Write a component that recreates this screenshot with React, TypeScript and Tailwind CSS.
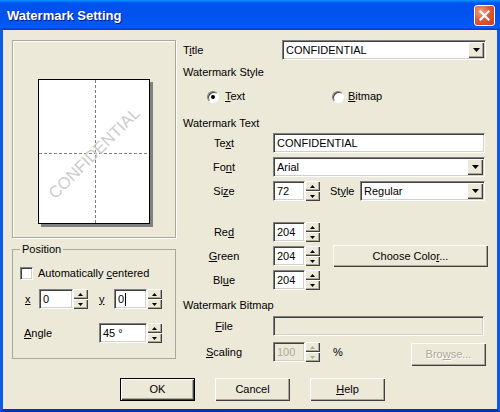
import type { ReactNode } from "react";

const sunken =
  "border border-t-[#808080] border-l-[#808080] border-b-white border-r-white shadow-[inset_1px_1px_0_#404040,inset_-1px_-1px_0_#d4d0c8]";
const raised =
  "bg-[#ece9d8] shadow-[inset_1px_1px_0_#fff,inset_-1px_-1px_0_#404040,inset_-2px_-2px_0_#aca899]";
const grayText = "text-[#aca899] [text-shadow:1px_1px_0_#fff]";

function U({ children }: { children: ReactNode }) {
  return <span className="underline decoration-1 underline-offset-[1px]">{children}</span>;
}

function Arrow({ dir, size = "sm", disabled }: { dir: "up" | "down"; size?: "sm" | "lg"; disabled?: boolean }) {
  const w = size === "lg" ? 7 : 5;
  const h = size === "lg" ? 4 : 3;
  const pts = dir === "up" ? `0,${h} ${w / 2},0 ${w},${h}` : `0,0 ${w / 2},${h} ${w},0`;
  return (
    <svg width={w} height={h} viewBox={`0 0 ${w} ${h}`} className="block">
      <polygon points={pts} fill={disabled ? "#aca899" : "#000"} />
    </svg>
  );
}

function Spin({ disabled }: { disabled?: boolean }) {
  return (
    <div className="flex h-[20px] w-[15px] flex-col">
      <div className={`${raised} flex h-[10px] items-center justify-center`}>
        <Arrow dir="up" disabled={disabled} />
      </div>
      <div className={`${raised} flex h-[10px] items-center justify-center`}>
        <Arrow dir="down" disabled={disabled} />
      </div>
    </div>
  );
}

function Edit({ w, children, disabled }: { w: string; children?: ReactNode; disabled?: boolean }) {
  return (
    <div
      className={`${sunken} ${w} flex h-[20px] items-center pl-[3px] ${
        disabled ? "bg-[#ece9d8] text-[#aca899]" : "bg-white"
      }`}
    >
      {children}
    </div>
  );
}

function NumField({ w, value, disabled, cursor }: { w: string; value: string; disabled?: boolean; cursor?: boolean }) {
  return (
    <div className="flex">
      <Edit w={w} disabled={disabled}>
        {value}
        {cursor ? <span className="ml-px inline-block h-[13px] w-px bg-black" /> : null}
      </Edit>
      <Spin disabled={disabled} />
    </div>
  );
}

function Combo({ w, value }: { w: string; value: string }) {
  return (
    <div className={`${sunken} ${w} flex h-[20px] items-center bg-white pl-[3px] pr-[1px]`}>
      <span className="flex-1">{value}</span>
      <div className={`${raised} flex h-[16px] w-[16px] items-center justify-center`}>
        <Arrow dir="down" size="lg" />
      </div>
    </div>
  );
}

function Button({ children, isDefault, disabled, className = "" }: { children: ReactNode; isDefault?: boolean; disabled?: boolean; className?: string }) {
  return (
    <div
      className={`flex items-center justify-center ${className} ${
        isDefault ? "border border-black" : ""
      } ${raised} ${disabled ? grayText : "text-black"}`}
    >
      {children}
    </div>
  );
}

function Radio({ checked }: { checked?: boolean }) {
  return (
    <div className="flex h-[12px] w-[12px] items-center justify-center rounded-full border border-t-[#808080] border-l-[#808080] border-b-white border-r-white bg-white shadow-[inset_1px_1px_0_#404040]">
      {checked ? <div className="h-[4px] w-[4px] rounded-full bg-black" /> : null}
    </div>
  );
}

function RowLabel({ children }: { children: ReactNode }) {
  return <span className="w-[82px] text-center">{children}</span>;
}

function PagePreview() {
  return (
    <div className="h-[145px] w-[112px] border border-black bg-white shadow-[3px_3px_0_#808080]">
      <svg width="110" height="143" viewBox="0 0 110 143" className="block">
        <line x1="56.5" y1="0" x2="56.5" y2="143" stroke="#808080" strokeDasharray="3 2" />
        <line x1="0" y1="73.5" x2="110" y2="73.5" stroke="#808080" strokeDasharray="3 2" />
        <text
          x="56"
          y="74"
          textAnchor="middle"
          dominantBaseline="middle"
          transform="rotate(-45 56 74)"
          fill="#cccccc"
          fontSize="16.5"
          fontFamily="'Liberation Sans', Arial, sans-serif"
        >
          CONFIDENTIAL
        </text>
      </svg>
    </div>
  );
}

export default function App() {
  return (
    <div className="flex h-[412px] w-[500px] flex-col font-['Liberation_Sans',Arial,sans-serif] text-[11px] leading-[13px] text-black">
      {/* title bar */}
      <div className="flex h-[30px] items-center justify-between bg-[linear-gradient(180deg,#0997ff_0%,#0053ee_10%,#0050ee_40%,#0058f0_80%,#005bff_92%,#0043d8_96%,#003dd7_100%)] pl-[7px] pr-[5px]">
        <span className="text-[13px] font-bold text-white [text-shadow:1px_1px_0_#0a1883]">Watermark Setting</span>
        <div className="flex h-[21px] w-[21px] items-center justify-center rounded-[3px] border border-white bg-[radial-gradient(circle_at_30%_30%,#f0a58a_0%,#e2593a_45%,#c63d1b_100%)]">
          <svg width="11" height="11" viewBox="0 0 11 11">
            <path d="M1.5 1.5 L9.5 9.5 M9.5 1.5 L1.5 9.5" stroke="#fff" strokeWidth="2.2" strokeLinecap="square" />
          </svg>
        </div>
      </div>

      {/* client */}
      <div className="flex flex-1 flex-col border-x-[3px] border-b-[3px] border-x-[#0b5ae8] border-b-[#0a30b8] bg-[#ece9d8] pl-[9px] pt-[10px]">
        <div className="flex h-[328px]">
          {/* left column */}
          <div className="flex w-[164px] flex-col">
            <div className="h-[198px] border border-[#aca899] pl-[25px] pt-[38px] shadow-[inset_1px_1px_0_#fff,1px_1px_0_#fff]">
              <PagePreview />
            </div>
            <fieldset className="mt-[5px] h-[116px] border border-[#aca899]">
              <legend className="ml-[7px] px-[2px] leading-[13px]">Position</legend>
              <div className="ml-[7px] mt-[11px] flex items-center gap-[5px]">
                <div className={`${sunken} h-[13px] w-[13px] bg-white`} />
                <span>
                  Automatically <U>c</U>entered
                </span>
              </div>
              <div className="mt-[9px] flex items-center">
                <span className="ml-[12px] w-[14px]">
                  <U>x</U>
                </span>
                <NumField w="w-[34px]" value="0" />
                <span className="ml-[11px] w-[15px]">
                  <U>y</U>
                </span>
                <NumField w="w-[33px]" value="0" cursor />
              </div>
              <div className="mt-[14px] flex items-center">
                <span className="ml-[11px] w-[75px]">
                  <U>A</U>ngle
                </span>
                <NumField w="w-[48px]" value="45 °" />
              </div>
            </fieldset>
          </div>

          {/* right column */}
          <div className="ml-[7px] flex w-[305px] flex-col">
            <div className="flex h-[20px] items-center">
              <span className="w-[99px]">
                T<U>i</U>tle
              </span>
              <Combo w="w-[204px]" value="CONFIDENTIAL" />
            </div>
            <span className="mt-[6px]">Watermark Style</span>
            <div className="mt-[11px] flex h-[13px] items-center">
              <div className="ml-[24px] flex w-[125px] items-center gap-[6px]">
                <Radio checked />
                <span>
                  <U>T</U>ext
                </span>
              </div>
              <div className="flex items-center gap-[4px]">
                <Radio />
                <span>
                  <U>B</U>itmap
                </span>
              </div>
            </div>
            <span className="mt-[14px]">Watermark Text</span>
            <div className="mt-[3px] flex h-[20px] items-center">
              <RowLabel>
                Te<U>x</U>t
              </RowLabel>
              <div className="ml-[8px]">
                <Edit w="w-[212px]">CONFIDENTIAL</Edit>
              </div>
            </div>
            <div className="mt-[4px] flex h-[20px] items-center">
              <RowLabel>
                Fo<U>n</U>t
              </RowLabel>
              <div className="ml-[8px]">
                <Combo w="w-[212px]" value="Arial" />
              </div>
            </div>
            <div className="mt-[4px] flex h-[20px] items-center">
              <RowLabel>
                Si<U>z</U>e
              </RowLabel>
              <div className="ml-[8px]">
                <NumField w="w-[32px]" value="72" />
              </div>
              <span className="ml-[10px] w-[30px]">
                St<U>y</U>le
              </span>
              <Combo w="w-[125px]" value="Regular" />
            </div>
            <div className="mt-[21px] flex h-[20px] items-center">
              <RowLabel>
                Re<U>d</U>
              </RowLabel>
              <div className="ml-[8px]">
                <NumField w="w-[32px]" value="204" />
              </div>
            </div>
            <div className="mt-[3px] flex h-[22px] items-center">
              <RowLabel>
                <U>G</U>reen
              </RowLabel>
              <div className="ml-[8px]">
                <NumField w="w-[32px]" value="204" />
              </div>
              <Button className="ml-[13px] h-[22px] w-[155px]">
                <span>
                  Choose Colo<U>r</U>...
                </span>
              </Button>
            </div>
            <div className="mt-[3px] flex h-[20px] items-center">
              <RowLabel>
                Bl<U>u</U>e
              </RowLabel>
              <div className="ml-[8px]">
                <NumField w="w-[32px]" value="204" />
              </div>
            </div>
            <span className="mt-[9px]">Watermark Bitmap</span>
            <div className="mt-[4px] flex h-[20px] items-center">
              <RowLabel>
                <U>F</U>ile
              </RowLabel>
              <div className="ml-[8px]">
                <Edit w="w-[211px]" disabled />
              </div>
            </div>
            <div className="mt-[6px] flex items-start">
              <div className="flex h-[20px] items-center">
                <RowLabel>
                  <U>S</U>caling
                </RowLabel>
                <div className="ml-[8px]">
                  <NumField w="w-[32px]" value="100" disabled />
                </div>
                <span className="ml-[13px]">%</span>
              </div>
              <Button disabled className="ml-auto mr-[2px] mt-[1px] h-[23px] w-[75px]">
                <span>
                  Bro<U>w</U>se...
                </span>
              </Button>
            </div>
          </div>
        </div>

        {/* bottom buttons */}
        <div className="ml-[108px] mt-[10px] flex gap-[20px]">
          <Button isDefault className="h-[23px] w-[75px]">
            OK
          </Button>
          <Button className="h-[23px] w-[75px]">Cancel</Button>
          <Button className="h-[23px] w-[75px]">
            <span>
              <U>H</U>elp
            </span>
          </Button>
        </div>
      </div>
    </div>
  );
}
